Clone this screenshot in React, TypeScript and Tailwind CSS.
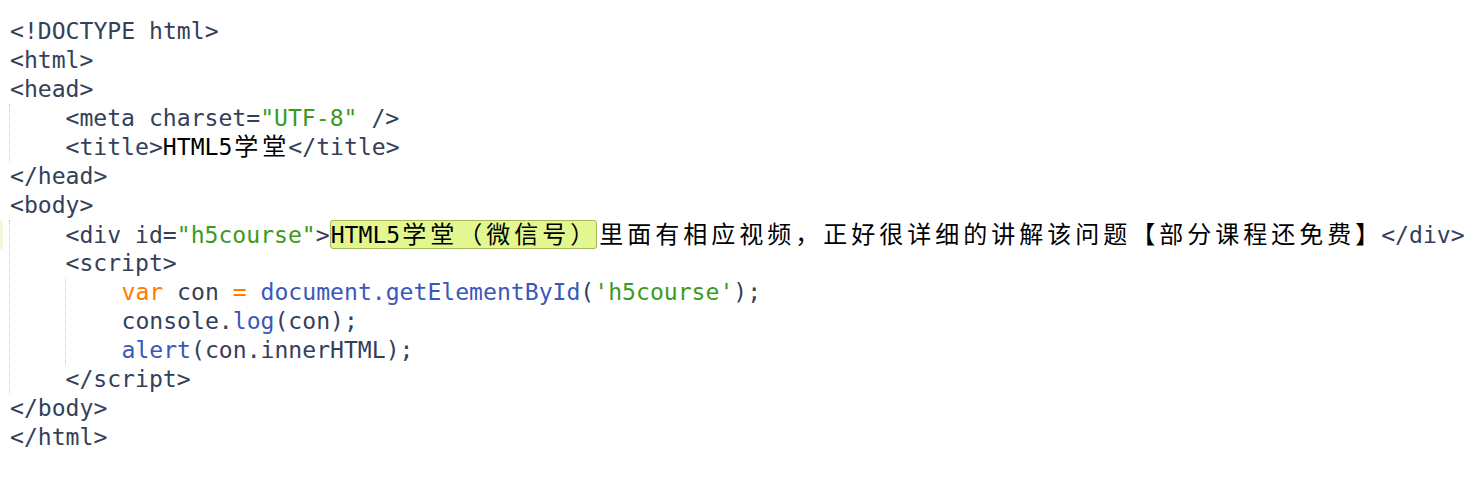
import type { ReactNode } from "react"

const str = "text-[#3c9a1c]"
const kw = "text-[#ff7a00]"
const fn = "text-[#3a58b9]"
const ink = "text-black"

// ascii runs stay in the mono font, wide chars get a double-width cell
function Mixed({ text }: { text: string }) {
  const out: ReactNode[] = []
  let run = ""
  Array.from(text).forEach((ch, i) => {
    if (ch.charCodeAt(0) < 256) {
      run += ch
      return
    }
    if (run) {
      out.push(run)
      run = ""
    }
    out.push(
      <span
        key={i}
        className="inline-block w-[28px] text-center font-['Noto_Sans_CJK_SC',sans-serif] text-[24px] leading-none"
      >
        {ch}
      </span>
    )
  })
  if (run) out.push(run)
  return <>{out}</>
}

function Line({
  children,
  indent,
  current,
}: {
  children: ReactNode
  indent?: boolean
  current?: boolean
}) {
  return (
    <div
      className={
        "relative h-[29px] whitespace-pre leading-[29px] " +
        (indent ? "pl-[55.5px]" : "")
      }
    >
      {current && (
        <span className="absolute top-0 left-[-10px] h-full w-[3px] bg-[#f3f8d8]" />
      )}
      {children}
    </div>
  )
}

function Guide({ children, inset }: { children: ReactNode; inset?: boolean }) {
  return (
    <div
      className={
        "border-l border-dotted border-[#c6c6c6] " +
        (inset ? "ml-[55px]" : "-ml-px")
      }
    >
      {children}
    </div>
  )
}

export default function App() {
  return (
    <div className="min-h-screen bg-white pt-[17px] pl-[10px] font-['DejaVu_Sans_Mono',monospace] text-[23.1px] text-[#34405a]">
      <Line>{"<!DOCTYPE html>"}</Line>
      <Line>{"<html>"}</Line>
      <Line>{"<head>"}</Line>
      <Guide>
        <Line indent>
          {"<meta charset="}
          <span className={str}>"UTF-8"</span>
          {" />"}
        </Line>
        <Line indent>
          {"<title>"}
          <span className={ink}>
            <Mixed text="HTML5学堂" />
          </span>
          {"</title>"}
        </Line>
      </Guide>
      <Line>{"</head>"}</Line>
      <Line>{"<body>"}</Line>
      <Guide>
        <Line indent current>
          {"<div id="}
          <span className={str}>"h5course"</span>
          {">"}
          <span className={"inline-block rounded-[3px] border border-[#a5b85a] bg-[#e2f78f] leading-[25px] " + ink}>
            <Mixed text="HTML5学堂（微信号）" />
          </span>
          <span className={ink}>
            <Mixed text="里面有相应视频，正好很详细的讲解该问题【部分课程还免费】" />
          </span>
          {"</div>"}
        </Line>
        <Line indent>{"<script>"}</Line>
        <Guide inset>
          <Line indent>
            <span className={kw}>var</span>
            {" con "}
            <span className={kw}>=</span>{" "}
            <span className={fn}>document.getElementById</span>
            {"("}
            <span className={str}>'h5course'</span>
            {");"}
          </Line>
          <Line indent>
            {"console."}
            <span className={fn}>log</span>
            {"(con);"}
          </Line>
          <Line indent>
            <span className={fn}>alert</span>
            {"(con.innerHTML);"}
          </Line>
        </Guide>
        <Line indent>{"</script>"}</Line>
      </Guide>
      <Line>{"</body>"}</Line>
      <Line>{"</html>"}</Line>
    </div>
  )
}
